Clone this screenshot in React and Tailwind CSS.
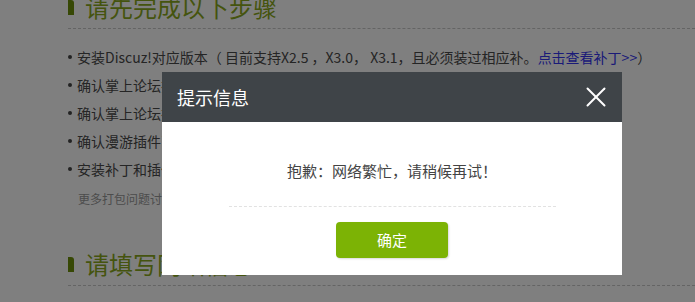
import { X } from "lucide-react";

const font = { fontFamily: '"Noto Sans CJK SC", "Noto Sans", sans-serif' };

function Heading({ children }) {
  return (
    <div className="flex items-center gap-[11px] h-[32px] border-b border-dashed border-[#c8c8c8] pb-[5px] box-content">
      <span className="w-[6px] h-[15px] bg-[#6f900a] rounded-tr-[3px]" />
      <h2 className="text-[24px] leading-[32px] text-[#8aa91c]">{children}</h2>
    </div>
  );
}

function Item({ children }) {
  return (
    <li className="flex items-center h-[28px] text-[14px] text-[#4a4a4a]">
      <span className="w-[4px] h-[4px] rounded-full bg-[#444] mr-[5px]" />
      {children}
    </li>
  );
}

export default function App() {
  return (
    <div className="relative w-[695px] h-[302px] overflow-hidden bg-white" style={font}>
      <div className="pl-[68px] -mt-[9px]">
        <Heading>请先完成以下步骤</Heading>
        <ul className="mt-[14px]">
          <Item>
            安装Discuz!对应版本（ 目前支持X2.5 ，X3.0， X3.1，且必须装过相应补。
            <a className="text-[#3434f0]">点击查看补丁&gt;&gt;</a>）
          </Item>
          <Item>确认掌上论坛插件已经安装并开启</Item>
          <Item>确认掌上论坛插件已升级到最新版本</Item>
          <Item>确认漫游插件已经开启</Item>
          <Item>安装补丁和插件后请更新缓存</Item>
        </ul>
        <p className="mt-[7px] ml-[10px] text-[12px] leading-[18px] text-[#999]">更多打包问题讨论请进入官方论坛</p>
        <div className="mt-[40px]">
          <Heading>请填写网站信息</Heading>
        </div>
      </div>

      <div className="absolute inset-0 bg-black/50" />

      <div className="absolute left-[162px] top-[72px] w-[460px] h-[203px] bg-white">
        <div className="flex items-center justify-between h-[50px] bg-[#3f4448] pl-[15px] pr-[9px]">
          <span className="text-[18px] text-white">提示信息</span>
          <X className="w-[34px] h-[34px] text-white" strokeWidth={1.4} />
        </div>
        <div className="flex flex-col items-center">
          <p className="mt-[37px] text-[15px] leading-[24px] text-[#444]">抱歉：网络繁忙，请稍候再试！</p>
          <div className="mt-[23px] w-[327px] border-t border-dashed border-[#e2e2e2]" />
          <button className="mt-[15px] w-[112px] h-[36px] rounded-[4px] bg-[#7cb305] text-white text-[15px] shadow-[1px_1px_2px_rgba(0,0,0,0.15)]">
            确定
          </button>
        </div>
      </div>
    </div>
  );
}
